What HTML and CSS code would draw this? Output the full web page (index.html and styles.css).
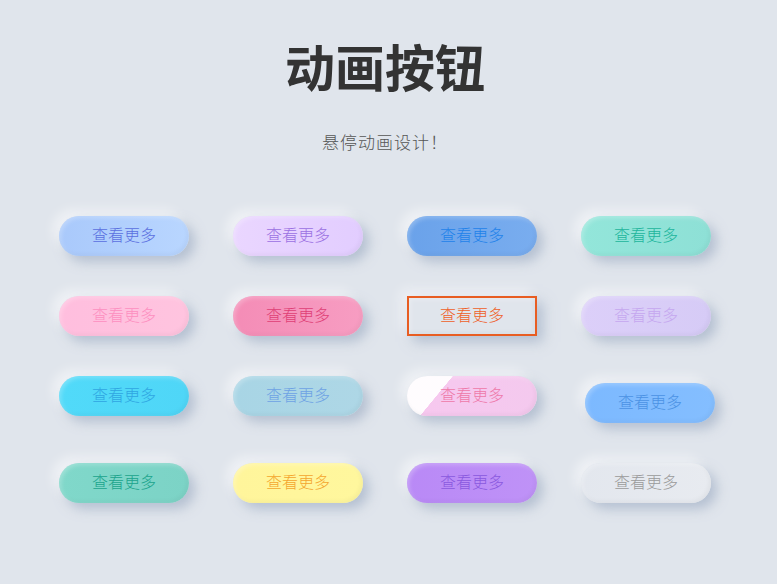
FILE: index.html
```html
<!DOCTYPE html>
<html lang="zh">
<head>
<meta charset="utf-8">
<title>动画按钮</title>
<link rel="stylesheet" href="styles.css">
</head>
<body>
<div class="page">
  <h1 class="title">动画按钮</h1>
  <p class="subtitle">悬停动画设计！</p>
  <div class="grid">
    <button class="btn b-blue">查看更多</button>
    <button class="btn b-lavender">查看更多</button>
    <button class="btn b-royal">查看更多</button>
    <button class="btn b-mint">查看更多</button>

    <button class="btn b-pink">查看更多</button>
    <button class="btn b-rose">查看更多</button>
    <button class="btn b-outline">查看更多</button>
    <button class="btn b-violet">查看更多</button>

    <button class="btn b-cyan">查看更多</button>
    <button class="btn b-sky">查看更多</button>
    <button class="btn b-shine">查看更多</button>
    <button class="btn b-azure b-shift">查看更多</button>

    <button class="btn b-teal">查看更多</button>
    <button class="btn b-yellow">查看更多</button>
    <button class="btn b-purple">查看更多</button>
    <button class="btn b-gray">查看更多</button>
  </div>
</div>
</body>
</html>
```

FILE: styles.css
```css
html, body {
  margin: 0;
  padding: 0;
  background: #e0e5ec;
}

body {
  font-family: "Noto Sans CJK SC", "Noto Sans", sans-serif;
  height: 584px;
  overflow: hidden;
}

.page {
  width: 770px;
  display: flex;
  flex-direction: column;
  align-items: center;
}

.title {
  margin: 35px 0 0;
  font-size: 50px;
  line-height: 60px;
  font-weight: 700;
  color: #333;
}

.subtitle {
  margin: 35px 0 0;
  font-size: 17px;
  letter-spacing: 1px;
  line-height: 24px;
  color: #555;
  font-weight: 300;
}

.grid {
  margin-top: 62px;
  display: grid;
  grid-template-columns: repeat(4, 174px);
  row-gap: 40px;
  justify-items: center;
  align-items: start;
}

.btn {
  box-sizing: border-box;
  width: 130px;
  height: 40px;
  border: none;
  border-radius: 20px;
  padding: 0 0 3px;
  font-family: "Noto Sans CJK SC", "Noto Sans", sans-serif;
  font-size: 16px;
  font-weight: 300;
  line-height: 37px;
  background: #e0e5ec;
  box-shadow: 6px 6px 12px rgba(163, 177, 198, 0.7),
              -6px -6px 12px rgba(255, 255, 255, 0.55),
              inset 2px 2px 4px rgba(255, 255, 255, 0.25),
              inset -2px -2px 4px rgba(0, 0, 0, 0.04);
}

.b-blue { background: linear-gradient(90deg, #a9c9fb, #b9d6ff); color: #5a6fe0; }
.b-lavender { background: linear-gradient(90deg, #ead6ff, #e2cdff); color: #9b70e2; }
.b-royal { background: linear-gradient(90deg, #6aa2ea, #79adef); color: #1f82ea; }
.b-mint { background: linear-gradient(90deg, #93e6da, #8ee0d6); color: #20b59c; }

.b-pink { background: linear-gradient(90deg, #ffbede, #ffc4df); color: #fd8fc0; }
.b-rose { background: linear-gradient(90deg, #f48cb6, #f79dc2); color: #df3f76; }
.b-violet { background: linear-gradient(90deg, #dccff9, #d6cbf6); color: #c5a7ef; }

.b-outline {
  border-radius: 0;
  border: 2px solid #e85d22;
  background: #e0e5ec;
  color: #ef5f28;
  line-height: 33px;
}

.b-cyan { background: linear-gradient(90deg, #51daf9, #4fd6f7); color: #2fa6e2; }
.b-sky { background: linear-gradient(90deg, #a8d5e5, #aed7e6); color: #6ea2e4; }
.b-shine {
  background: linear-gradient(129.5deg, rgba(255, 255, 255, 0.95) 0 28%, rgba(255, 255, 255, 0) 28.3%),
              linear-gradient(90deg, #f7c8ef, #f4c9ee);
  color: #ee78a9;
}
.b-azure { background: linear-gradient(90deg, #7cb9ff, #84beff); color: #4b92e4; }
.b-shift { margin: 7px 0 0 8px; }

.b-teal { background: linear-gradient(90deg, #80d8ca, #7cd3c6); color: #1ba48c; }
.b-yellow { background: linear-gradient(90deg, #fff59b, #fff79d); color: #f4a62e; }
.b-purple { background: linear-gradient(90deg, #b989f6, #bf92f7); color: #8a59df; }
.b-gray { background: linear-gradient(90deg, #e3e7ee, #e8ebf0); color: #9a9a9a; }
```
